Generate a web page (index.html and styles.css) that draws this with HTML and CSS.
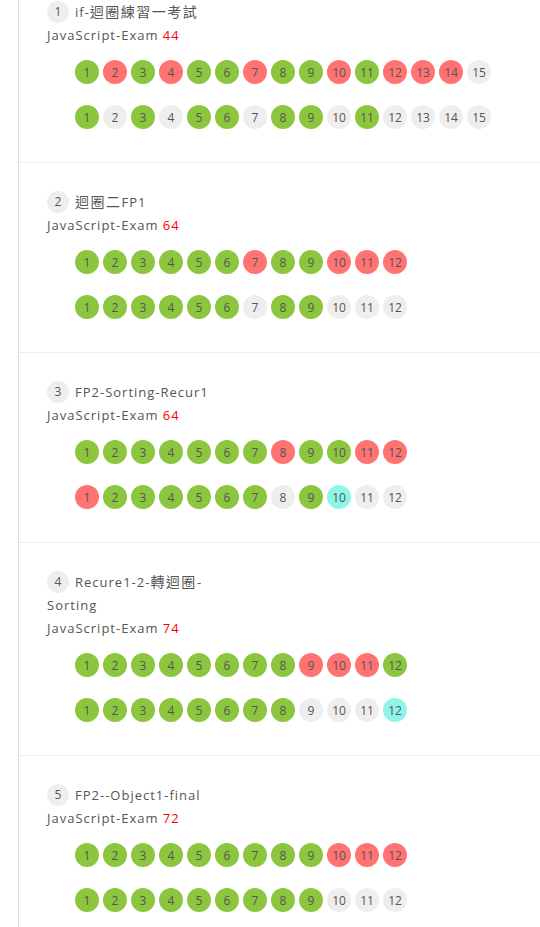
FILE: index.html
```html
<!DOCTYPE html>
<html lang="zh-Hant">
<head>
<meta charset="utf-8">
<title>Exam results</title>
<link rel="stylesheet" href="styles.css">
</head>
<body>
<div class="timeline">
  <div class="item">
    <div class="head"><span class="badge">1</span>if-<span class="cjk">迴圈練習一考試</span></div>
    <div class="exam">JavaScript-Exam <span class="score">44</span></div>
    <div class="row">
      <span class="c g">1</span><span class="c r">2</span><span class="c g">3</span><span class="c r">4</span><span class="c g">5</span><span class="c g">6</span><span class="c r">7</span><span class="c g">8</span><span class="c g">9</span><span class="c r">10</span><span class="c g">11</span><span class="c r">12</span><span class="c r">13</span><span class="c r">14</span><span class="c e">15</span>
    </div>
    <div class="row">
      <span class="c g">1</span><span class="c e">2</span><span class="c g">3</span><span class="c e">4</span><span class="c g">5</span><span class="c g">6</span><span class="c e">7</span><span class="c g">8</span><span class="c g">9</span><span class="c e">10</span><span class="c g">11</span><span class="c e">12</span><span class="c e">13</span><span class="c e">14</span><span class="c e">15</span>
    </div>
  </div>
  <div class="item">
    <div class="head"><span class="badge">2</span><span class="cjk">迴圈二</span>FP1</div>
    <div class="exam">JavaScript-Exam <span class="score">64</span></div>
    <div class="row">
      <span class="c g">1</span><span class="c g">2</span><span class="c g">3</span><span class="c g">4</span><span class="c g">5</span><span class="c g">6</span><span class="c r">7</span><span class="c g">8</span><span class="c g">9</span><span class="c r">10</span><span class="c r">11</span><span class="c r">12</span>
    </div>
    <div class="row">
      <span class="c g">1</span><span class="c g">2</span><span class="c g">3</span><span class="c g">4</span><span class="c g">5</span><span class="c g">6</span><span class="c e">7</span><span class="c g">8</span><span class="c g">9</span><span class="c e">10</span><span class="c e">11</span><span class="c e">12</span>
    </div>
  </div>
  <div class="item">
    <div class="head"><span class="badge">3</span>FP2-Sorting-Recur1</div>
    <div class="exam">JavaScript-Exam <span class="score">64</span></div>
    <div class="row">
      <span class="c g">1</span><span class="c g">2</span><span class="c g">3</span><span class="c g">4</span><span class="c g">5</span><span class="c g">6</span><span class="c g">7</span><span class="c r">8</span><span class="c g">9</span><span class="c g">10</span><span class="c r">11</span><span class="c r">12</span>
    </div>
    <div class="row">
      <span class="c r">1</span><span class="c g">2</span><span class="c g">3</span><span class="c g">4</span><span class="c g">5</span><span class="c g">6</span><span class="c g">7</span><span class="c e">8</span><span class="c g">9</span><span class="c t">10</span><span class="c e">11</span><span class="c e">12</span>
    </div>
  </div>
  <div class="item">
    <div class="head"><span class="badge">4</span>Recure1-2-<span class="cjk">轉迴圈</span>-Sorting</div>
    <div class="exam">JavaScript-Exam <span class="score">74</span></div>
    <div class="row">
      <span class="c g">1</span><span class="c g">2</span><span class="c g">3</span><span class="c g">4</span><span class="c g">5</span><span class="c g">6</span><span class="c g">7</span><span class="c g">8</span><span class="c r">9</span><span class="c r">10</span><span class="c r">11</span><span class="c g">12</span>
    </div>
    <div class="row">
      <span class="c g">1</span><span class="c g">2</span><span class="c g">3</span><span class="c g">4</span><span class="c g">5</span><span class="c g">6</span><span class="c g">7</span><span class="c g">8</span><span class="c e">9</span><span class="c e">10</span><span class="c e">11</span><span class="c t">12</span>
    </div>
  </div>
  <div class="item">
    <div class="head"><span class="badge">5</span>FP2--Object1-final</div>
    <div class="exam">JavaScript-Exam <span class="score">72</span></div>
    <div class="row">
      <span class="c g">1</span><span class="c g">2</span><span class="c g">3</span><span class="c g">4</span><span class="c g">5</span><span class="c g">6</span><span class="c g">7</span><span class="c g">8</span><span class="c g">9</span><span class="c r">10</span><span class="c r">11</span><span class="c r">12</span>
    </div>
    <div class="row">
      <span class="c g">1</span><span class="c g">2</span><span class="c g">3</span><span class="c g">4</span><span class="c g">5</span><span class="c g">6</span><span class="c g">7</span><span class="c g">8</span><span class="c g">9</span><span class="c e">10</span><span class="c e">11</span><span class="c e">12</span>
    </div>
  </div>
</div>
</body>
</html>
```
FILE: styles.css
```css
html, body {
  margin: 0;
  padding: 0;
  background: #fff;
}
body {
  font-family: "Open Sans", "Noto Sans CJK TC", sans-serif;
  color: #555;
  font-size: 13px;
  overflow: hidden;
}
.timeline {
  margin-left: 18px;
  border-left: 1px solid #ddd;
  margin-top: -27px;
  min-height: 1100px;
}
.item {
  border-bottom: 1px solid #eee;
  padding: 28px 0 33px 28px;
}
.head {
  max-width: 172px;
  line-height: 23px;
  letter-spacing: 1px;
}
.cjk {
  font-size: 14px;
  line-height: 1;
  letter-spacing: 1.5px;
}
.badge {
  display: inline-block;
  width: 22px;
  height: 22px;
  line-height: 22px;
  border-radius: 50%;
  background: #eee;
  text-align: center;
  font-size: 12px;
  letter-spacing: 0;
  margin-right: 6px;
  vertical-align: top;
}
.exam {
  line-height: 23px;
  letter-spacing: 1px;
}
.score {
  color: #f00;
}
.row {
  display: flex;
  gap: 4px;
  margin-left: 28px;
  margin-top: 13px;
}
.row + .row {
  margin-top: 21px;
}
.c {
  width: 24px;
  height: 24px;
  border-radius: 50%;
  display: flex;
  align-items: center;
  justify-content: center;
  font-size: 12px;
  color: #555;
}
.g { background: #8cc63f; }
.r { background: #ff7373; }
.e { background: #eee; }
.t { background: #8ff5e8; }
```
